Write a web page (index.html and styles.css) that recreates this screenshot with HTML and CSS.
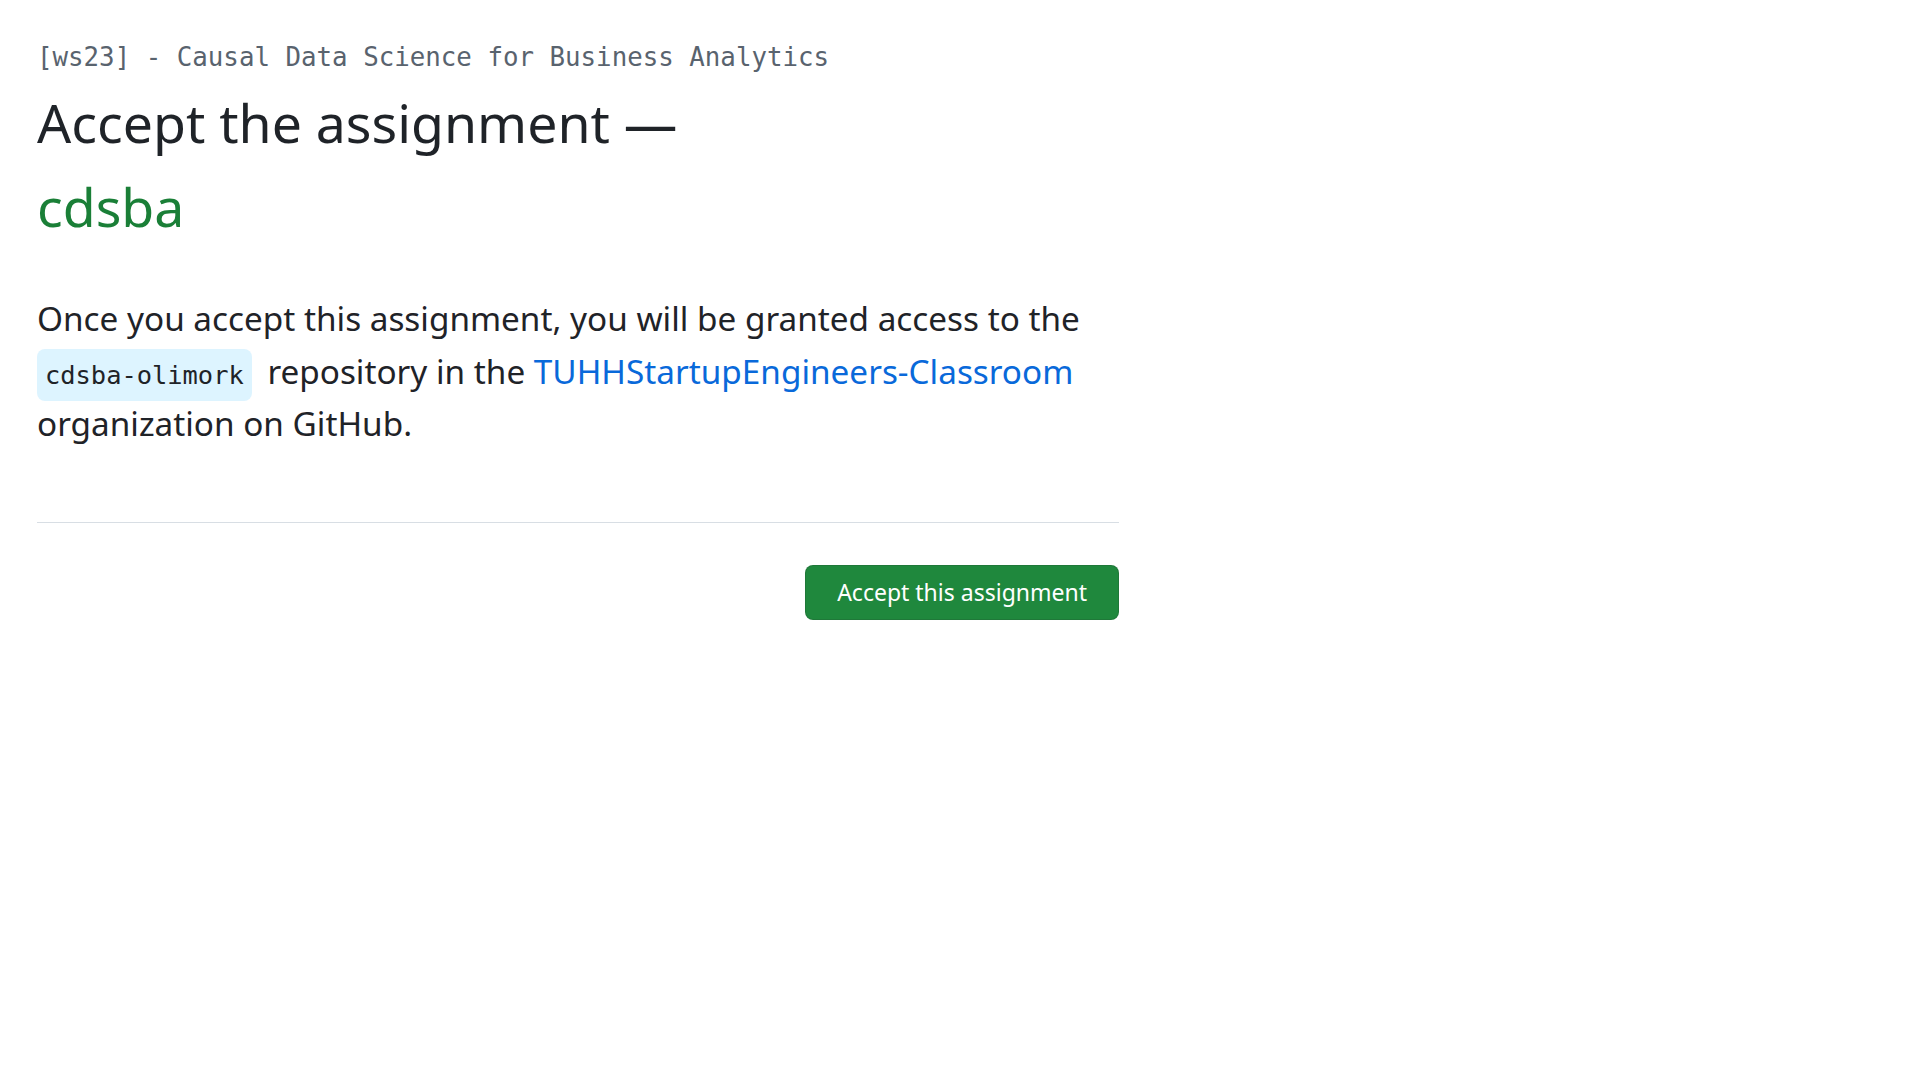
FILE: index.html
```html
<!DOCTYPE html>
<html lang="en">
<head>
<meta charset="utf-8">
<title>Accept the assignment</title>
<link rel="stylesheet" href="styles.css">
</head>
<body>
<main class="page">
  <div class="course">[ws23] - Causal Data Science for Business Analytics</div>
  <h1 class="title">Accept the assignment —<br><span class="assignment">cdsba</span></h1>
  <p class="lead">Once you accept this assignment, you will be granted access to the <code class="repo">cdsba-olimork</code> repository in the <a class="org" href="#">TUHHStartupEngineers-Classroom</a> organization on GitHub.</p>
  <hr class="divider">
  <div class="actions">
    <button class="btn-accept" type="button">Accept this assignment</button>
  </div>
</main>
</body>
</html>
```
FILE: styles.css
```css
html, body {
  margin: 0;
  padding: 0;
  background: #ffffff;
}
body {
  font-family: "Noto Sans", "Open Sans", sans-serif;
  color: #1f2328;
}
.page {
  width: 1082px;
  padding: 41px 0 0 37px;
}
.course {
  font-family: "DejaVu Sans Mono", "Liberation Mono", monospace;
  font-size: 25.8px;
  line-height: 32px;
  color: #59636e;
}
.title {
  margin: 8px 0 0;
  font-size: 53.6px;
  font-weight: 400;
  line-height: 84px;
  color: #1f2328;
}
.assignment {
  color: #1a7f37;
}
.lead {
  margin: 43px 0 0;
  font-size: 33.3px;
  line-height: 52.5px;
  color: #1f2328;
}
.repo {
  font-family: "DejaVu Sans Mono", "Liberation Mono", monospace;
  font-size: 25.4px;
  line-height: 1;
  background: #ddf4ff;
  border-radius: 8px;
  padding: 11px 8px;
  margin-right: 7px;
}
.org {
  color: #0969da;
  text-decoration: none;
}
.divider {
  margin: 72px 0 0;
  border: 0;
  border-top: 1px solid #d8dee4;
  height: 0;
}
.actions {
  display: flex;
  justify-content: flex-end;
  margin-top: 42px;
}
.btn-accept {
  font-family: "Noto Sans", "Open Sans", sans-serif;
  font-size: 23px;
  height: 55px;
  padding: 0 31px;
  color: #ffffff;
  background: #1f883d;
  border: 1px solid rgba(31, 35, 40, 0.15);
  border-radius: 8px;
}
```
